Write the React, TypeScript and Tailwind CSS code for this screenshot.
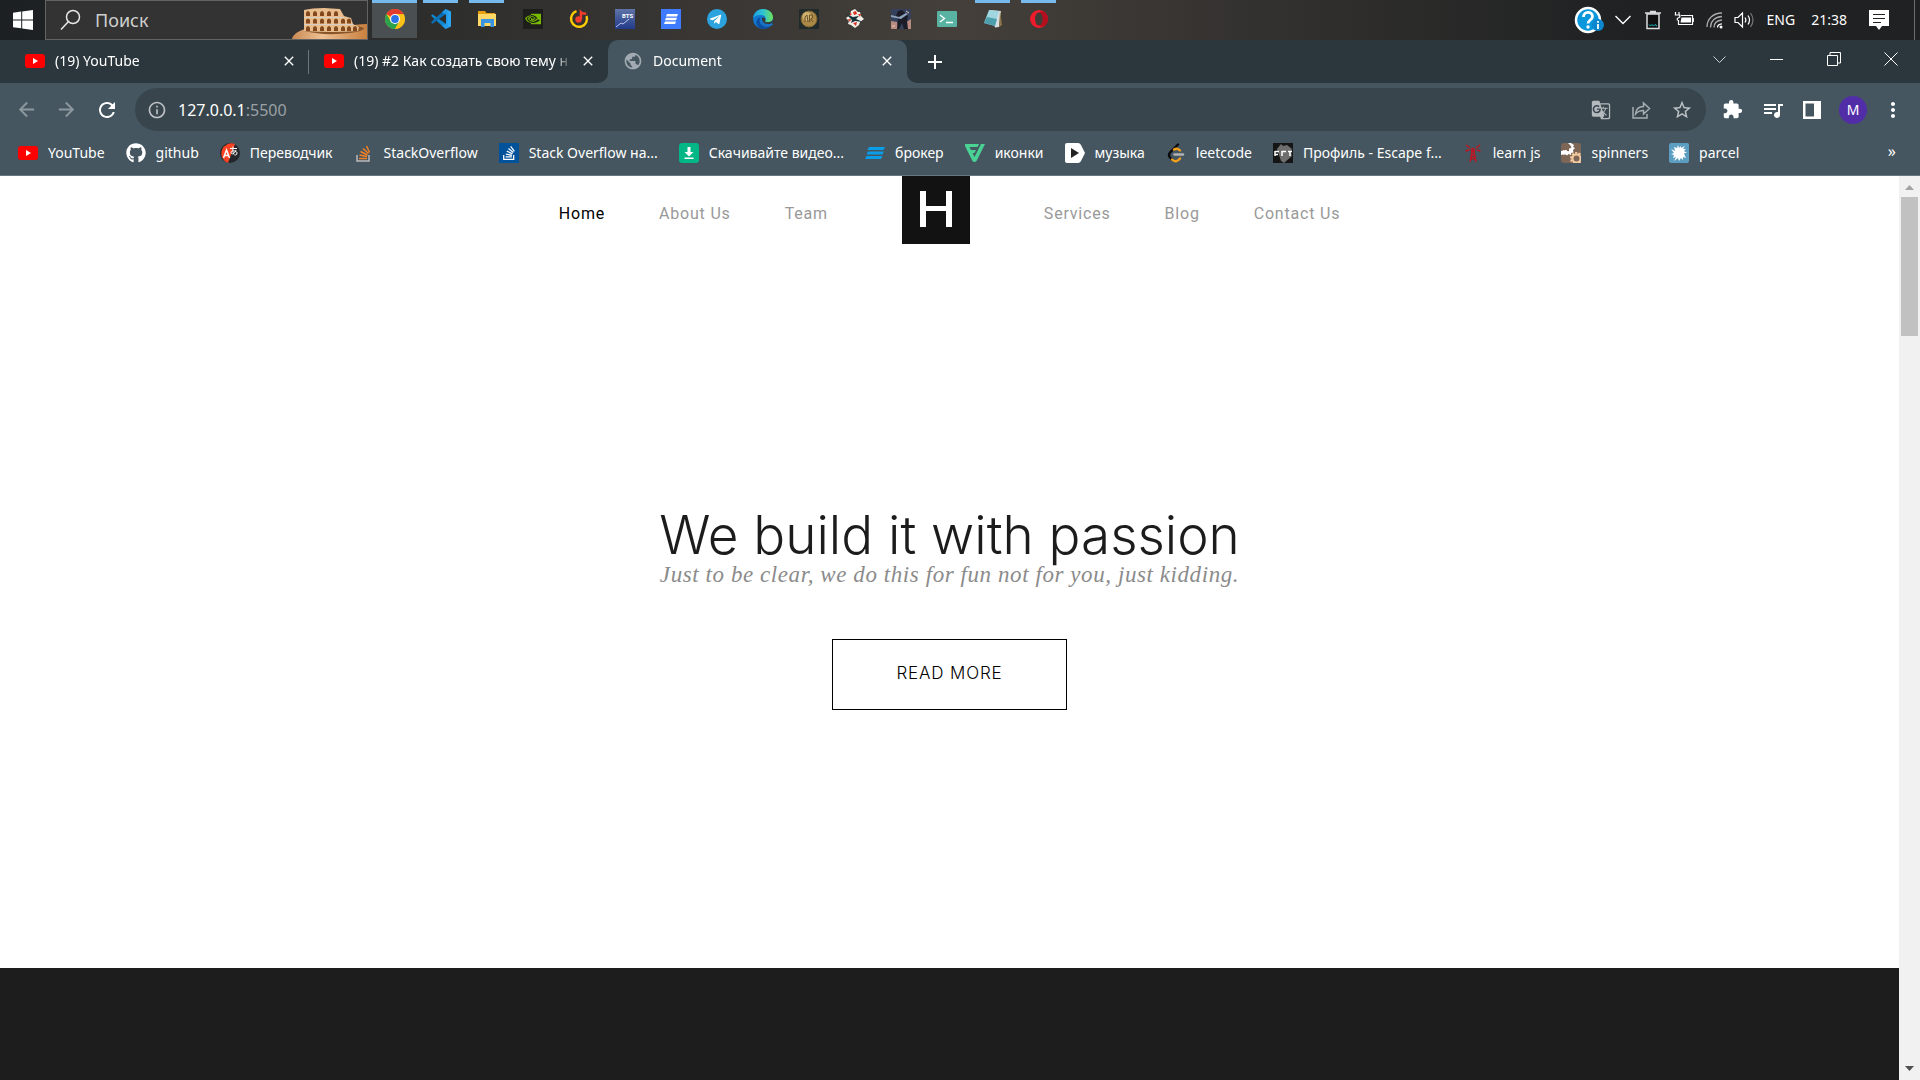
import React, { ReactNode } from "react";
import {
  MdArrowBack, MdArrowForward, MdRefresh, MdInfoOutline, MdPublic, MdStarBorder,
  MdExtension, MdQueueMusic, MdGTranslate, MdMoreVert, MdAdd, MdClose,
} from "react-icons/md";
import { FaGithub, FaTelegramPlane, FaStackOverflow } from "react-icons/fa";
import { SiNvidia } from "react-icons/si";

const ui = "font-['Noto_Sans',sans-serif]";

const YouTube = () => (
  <svg width="20" height="20" viewBox="0 0 20 20"><rect y="3" width="20" height="14" rx="3" fill="#f00" /><path d="M8 7l5 3-5 3z" fill="#fff" /></svg>
);

const WindowsLogo = () => (
  <svg width="20" height="20" viewBox="0 0 20 20" fill="#fff"><path d="M0 2.8L8.2 1.6V9.4H0zM9.2 1.5L20 0V9.4H9.2zM0 10.4H8.2V18.3L0 17.2zM9.2 10.4H20V20L9.2 18.4z" /></svg>
);

const Colosseum = () => (
  <svg width="75" height="38" viewBox="0 1 75 38">
    <defs>
      <linearGradient id="sand" x1="0" x2="1"><stop offset="0" stopColor="#c98a52" /><stop offset=".4" stopColor="#eec195" /><stop offset="1" stopColor="#c9803f" /></linearGradient>
    </defs>
    <path d="M0 39C1 33 10 29 22 27L62 25Q70 24 75 24V39z" fill="url(#sand)" />
    <path d="M12 31Q32 36 58 33Q72 31 72 28L66 26L12 28z" fill="#8a5529" />
    <path d="M12 10Q20 8 32 8L48 9L52 16L59 18L61 24L67 27L66 31Q40 33 12 31z" fill="#e9bd8d" />
    {[14, 21, 28, 35, 42].map((x) => <path key={x} d={`M${x} 16v-3.500q2-3 4 0v3.500z`} fill="#83491d" />)}
    {[14, 21, 28, 35, 42, 49, 55].map((x) => <path key={x} d={`M${x} 23.500v-3.500q2-3 4 0v3.500z`} fill="#83491d" />)}
    {[14, 21, 28, 35, 42, 49, 55, 61].map((x) => <path key={x} d={`M${x} 31v-3.500q2-3 4 0v3.500z`} fill="#83491d" />)}
    <path d="M12 17.500H52M12 24.500H61" stroke="#d8cfc4" strokeWidth="1" />
  </svg>
);

const Chrome = () => (
  <svg width="20" height="20" viewBox="0 0 20 20">
    <circle cx="10" cy="10" r="10" fill="#fbc116" />
    <path d="M10 10L1.340 5A10 10 0 0 1 18.660 5z" fill="#e33b2e" />
    <path d="M1.340 5A10 10 0 0 0 10 20L14.330 12.500L10 10L5.670 12.500z" fill="#2ba24c" />
    <path d="M10 5H18.660A10 10 0 0 1 10 20L14.330 12.500z" fill="#fbc116" />
    <circle cx="10" cy="10" r="5" fill="#fff" /><circle cx="10" cy="10" r="3.900" fill="#2a72e8" />
  </svg>
);
const VsCode = () => (
  <svg width="20" height="20" viewBox="0 0 20 20">
    <path d="M1.500 5.300L0 6.700l11.500 10.500L15 20V15z" fill="#0f86d0" />
    <path d="M1.500 14.700L0 13.300 11.500 2.800 15 0v5z" fill="#0b6fb5" />
    <path d="M14.500 0L20 2.500v15L14.500 20q1 0 1-1.200V1.200Q15.500 0 14.500 0z" fill="#2ba6f2" />
    <path d="M14.500 0L11 3.200l4 2.300v9L11 16.800l3.500 3.200 2-1V1z" fill="#239ae8" />
  </svg>
);
const Explorer = () => (
  <svg width="20" height="20" viewBox="0 0 20 20">
    <path d="M1 2h7l1.500 2H18v3H1z" fill="#e8a010" /><path d="M1 5h18v12H1z" fill="#ffd968" />
    <path d="M4 18v-8h13v8h-3.500v-4h-6v4z" fill="#3a94e4" />
  </svg>
);
const Nvidia = () => <span className="flex size-5 items-center justify-center bg-[#1d1e1c]"><SiNvidia size={16} color="#76b900" /></span>;
const YaMusic = () => (
  <svg width="20" height="20" viewBox="0 0 20 20"><path d="M7.500 2.200A8 8 0 1 0 17.500 7" fill="none" stroke="#fc0" strokeWidth="2.400" /><circle cx="9.500" cy="10.500" r="3.200" fill="#f53c2c" /><path d="M10.700 10V0l2.500 3 4 .5v2.500l-4-.5v5z" fill="#f53c2c" /></svg>
);
const Chart = () => (
  <svg width="20" height="20" viewBox="0 0 20 20">
    <defs><linearGradient id="bts" x2="0" y2="1"><stop stopColor="#5f74a8" /><stop offset="1" stopColor="#223a8a" /></linearGradient></defs>
    <path d="M0 0h20v20H0z" fill="url(#bts)" /><path d="M1 18l5-4 2 1 6-5" fill="none" stroke="#b9c6ea" />
    <text x="7" y="9" fontSize="6" fontWeight="700" fill="#fff" fontFamily="Roboto">BTS</text>
  </svg>
);
const Stripes = () => (
  <svg width="20" height="20" viewBox="0 0 20 20"><path d="M0 0h20v20H0z" fill="#3f7bff" /><path d="M6 5h11l-1 2.500H5zM5 8.800h11l-1 2.500H4zM4 12.600h11l-1 2.500H3z" fill="#fff" /></svg>
);
const Telegram = () => <span className="flex size-5 items-center justify-center rounded-full bg-[#2ba3de] pr-[2px]"><FaTelegramPlane size={13} color="#fff" /></span>;
const Edge = () => (
  <svg width="20" height="20" viewBox="0 0 20 20">
    <defs>
      <linearGradient id="e1" x1="0" x2="1"><stop stopColor="#1b9de2" /><stop offset=".5" stopColor="#30c3d2" /><stop offset="1" stopColor="#6be35a" /></linearGradient>
    </defs>
    <circle cx="10" cy="10" r="10" fill="#1278cf" />
    <path d="M0 9.500C.5 4 4.500 0 10 0c6 0 10 4 10 8.500 0 3-2.500 4.800-5 4.800-2.500 0-3.500-.8-2.700-1.800C14 9 11.500 6 8 6 4 6 .8 7.500 0 9.500z" fill="url(#e1)" />
    <path d="M7.500 8.500C5 12 7.500 17.500 13 17.500c3 0 4.500-1 5.500-1.800C17 18.500 13.500 20 10 20 5.500 19.500 3 16 3.500 12.500 4 10 5.500 8.500 7.500 8.500z" fill="#0d4f9f" />
    <path d="M9 8.500c-2 2.500-.5 6.500 4.500 7 2.500.2 4.500-.8 5.500-1.500l1 1.500-2 1.500c-4 2-10 0-10.500-5z" fill="#1a6fc4" />
    <path d="M9 8.800c2-.8 4 .8 3.300 2.700-.6 1.200.2 1.800 2.700 1.800 2 0 4-.8 5-2.500l-.8 3c-4 3-11 .5-10.200-5z" fill="#3a3835" />
  </svg>
);
const Coin = () => (
  <svg width="20" height="20" viewBox="0 0 20 20"><path d="M0 0h20v20H0z" fill="#1e2a2c" /><circle cx="10" cy="10" r="8" fill="#a98848" stroke="#7c602c" /><circle cx="8" cy="7.500" r="4.500" fill="#cdb070" /><path d="M6 13V8l2-2 1 7M10.500 13V6h3v3l-2 1 2.500 3" fill="none" stroke="#6b5226" strokeWidth="1" /></svg>
);
const Cards = () => (
  <svg width="20" height="20" viewBox="0 0 20 20"><path d="M10 0l3 3 2 0 1 4 3 3-4 3-1 3-4 3-4-3-3-1 1-3-3-3 4-3 1-4z" fill="#f3efe9" /><path d="M8 3l3-1 1 3-3 1zM13 5h3l-1 3zM3 10l3 0-1 3zM8 14l4-1-1 4zM5 4l2 1-2 2z" fill="#d83322" /><path d="M1 5l7 3 6-1-3 3 7 3-8-1-4 2 1-3z" fill="#16323b" /></svg>
);
const Soldier = () => (
  <svg width="20" height="20" viewBox="0 0 20 20"><path d="M0 0h20v20H0z" fill="#34405c" /><path d="M0 12l6 1 1 7H0zM14 14l6-4v10h-4z" fill="#b98a80" /><path d="M7 2l4-1 3 3 3 3-1 5 1 8h-4l-2-6-3 6H6l1-9-2-4z" fill="#1b1c28" /><path d="M0 6l8 2 7-4 2 1-7 5-10-2z" fill="#8fa3bf" /><path d="M1 17h3M15 2l3 2" stroke="#e7c9bd" /></svg>
);
const Terminal = () => (
  <svg width="20" height="20" viewBox="0 0 20 20"><rect y="2" width="20" height="16" rx="1" fill="#59b3a3" /><path d="M3 6l4.500 3.500L3 13M9 13.500h7" fill="none" stroke="#fff" strokeWidth="1.300" /></svg>
);
const Notepad = () => (
  <svg width="20" height="20" viewBox="0 0 20 20"><path d="M6 1l12 1-2 16-4 .5z" fill="#d8dfe2" /><path d="M6 1l10 1-4 15L1 14z" fill="#9fd6e0" /><path d="M4 8l10 2-2 7L1 14z" fill="#4e9fae" /><path d="M17 2l2 14-3 2z" fill="#8c7546" /></svg>
);
const Opera = () => (
  <svg width="20" height="20" viewBox="0 0 20 20"><path fillRule="evenodd" d="M10 1a9 9 0 1 1 0 18 9 9 0 0 1 0-18zM10 3.500c-2.300 0-3.900 2.900-3.900 6.500s1.600 6.500 3.900 6.500 3.900-2.900 3.900-6.500-1.600-6.500-3.900-6.500z" fill="#ee1c2b" /><path d="M10 16.500c2.300 0 3.900-2.900 3.900-6.500S12.300 3.500 10 3.500c3-2.500 9 0 9 6.500s-6 9-9 6.500z" fill="#b40d1c" /></svg>
);

type TaskApp = { name: string; icon: ReactNode; open?: boolean; active?: boolean };
const apps: TaskApp[] = [
  { name: "Chrome", icon: <Chrome />, open: true, active: true },
  { name: "VS Code", icon: <VsCode />, open: true },
  { name: "Explorer", icon: <Explorer />, open: true },
  { name: "Nvidia", icon: <Nvidia /> },
  { name: "Music", icon: <YaMusic /> },
  { name: "BTS", icon: <Chart /> },
  { name: "Broker", icon: <Stripes /> },
  { name: "Telegram", icon: <Telegram /> },
  { name: "Edge", icon: <Edge /> },
  { name: "Coin", icon: <Coin /> },
  { name: "Cards", icon: <Cards /> },
  { name: "Game", icon: <Soldier /> },
  { name: "Terminal", icon: <Terminal /> },
  { name: "Notepad", icon: <Notepad />, open: true },
  { name: "Opera", icon: <Opera />, open: true },
];

function Taskbar() {
  return (
    <header className="flex h-10 shrink-0 bg-linear-to-r from-[#1c2022] via-[#443f3a] via-50% to-[#1f2122] to-85% text-white">
      <button aria-label="Start" className="flex w-[45px] items-center justify-center"><WindowsLogo /></button>
      <div className="flex w-[323px] items-center justify-between border border-[#636363] bg-[#333] pl-3">
        <svg width="24" height="24" viewBox="0 0 24 24" fill="none" stroke="#e6e6e6" strokeWidth="1.500"><circle cx="15" cy="9" r="6.500" /><path d="M10.500 13.500L3 21.500" /></svg>
        <input aria-label="Поиск" placeholder="Поиск" className="ml-[13px] w-0 flex-1 bg-transparent text-lg outline-none placeholder:text-[#cfcfcf]" />
        <Colosseum />
      </div>
      <nav aria-label="Apps" className="ml-1 flex gap-px">
        {apps.map((a) => (
          <button key={a.name} aria-label={a.name} className={`flex h-[38px] w-[45px] flex-col items-center ${a.active ? "bg-[#4a4f52]" : ""}`}>
            <span className={`h-[3px] ${a.active ? "w-full" : "w-[35px]"} ${a.open ? "bg-[#76b9ed]" : ""}`} />
            <span className="mt-[6px]">{a.icon}</span>
          </button>
        ))}
      </nav>
      <div className="ml-auto flex items-center">
        <button aria-label="Help" className="mr-[10px]">
          <svg width="30" height="28" viewBox="0 0 30 28"><circle cx="14" cy="14" r="12" fill="#0a97dc" stroke="#fff" strokeWidth="2.500" /><path d="M9.500 11c0-6 9-6 9-.5 0 3.500-4.500 3.500-4.500 7" fill="none" stroke="#fff" strokeWidth="2.800" /><circle cx="14" cy="21" r="1.700" fill="#fff" /><circle cx="24" cy="19" r="6" fill="#0b86cf" /><path d="M24 18v5M24 15v1.800" stroke="#fff" strokeWidth="1.800" /></svg>
        </button>
        <button aria-label="Show hidden icons" className="mr-3"><svg width="18" height="18" viewBox="0 0 18 18" fill="none" stroke="#fff" strokeWidth="1.400"><path d="M1.500 5L9 12.500 16.500 5" /></svg></button>
        <button aria-label="Recycle bin" className="mr-3"><svg width="18" height="20" viewBox="0 0 18 20"><path d="M3 4h12v14.500H3z" fill="#111" stroke="#ddd" strokeWidth="1.500" /><path d="M1 3h16M6 1.500h6" stroke="#ddd" strokeWidth="1.500" /><path d="M5 14.500l1.500 1.500L8 14.500 9.500 16l1.500-1.500 2 1.500" fill="none" stroke="#18c6cf" /></svg></button>
        <button aria-label="Battery" className="mr-3"><svg width="20" height="18" viewBox="0 0 20 18" fill="none" stroke="#fff" strokeWidth="1.200"><path d="M7 4.500h11.500v9h-14V9M19.300 7v4M1.500 1v3M5 1v3M.8 4h5v2L3.300 7.500 3.300 9.500" /><path d="M7.500 6.500H17v5H6.500z" fill="#fff" stroke="none" /></svg></button>
        <button aria-label="Wi-Fi" className="mr-[10px]"><svg width="18" height="18" viewBox="0 0 18 18" fill="none" stroke="#aaa" strokeWidth="1.300"><path d="M1 16C1 8 7 2 16 2M4.500 16.500C4.500 10 9 6 16 5.500M8 16.500C8 12 11 9.500 16 9" /><path d="M11.500 16.500c0-2 1.500-3.500 4.500-3.700" stroke="#fff" /><circle cx="15" cy="16" r="1.500" fill="#fff" stroke="none" /></svg></button>
        <button aria-label="Volume" className="mr-[13px]"><svg width="20" height="18" viewBox="0 0 20 18" fill="none" stroke="#fff" strokeWidth="1.200"><path d="M1 6.500h3L8.500 2v14L4 11.500H1zM11 6.500q1.800 2.500 0 5M14 4.500q3 4.500 0 9" /><path d="M16.500 2q5 7 0 14" stroke="#777" /></svg></button>
        <span className="mr-4 text-sm">ENG</span>
        <time className="mr-[21px] text-sm">21:38</time>
        <button aria-label="Notifications" className="mr-[24px]"><svg width="22" height="20" viewBox="0 0 22 20"><path d="M1 0h20v16h-7l-3 4-3-4H1z" fill="#fff" /><path d="M5 4.500h12M5 8.500h12M5 12.500h8" stroke="#222" strokeWidth="1.200" /></svg></button>
        <span className="mr-[5px] h-10 w-px bg-[#6d6d6d]" />
      </div>
    </header>
  );
}

function Tab({ icon, title, active, divider }: { icon: ReactNode; title: string; active?: boolean; divider?: boolean }) {
  return (
    <div className={`flex h-[43px] w-[299px] items-center pr-3 pb-[2px] pl-[15px] ${active ? "rounded-t-[10px] bg-[#455660]" : ""} ${divider ? "bg-linear-to-r from-[#6b777d] to-[#6b777d] bg-[length:1px_24px] bg-right bg-no-repeat" : ""}`}>
      {icon}
      <span className="ml-[10px] flex-1 overflow-hidden mask-r-from-92% text-sm whitespace-nowrap text-white">{title}</span>
      <button aria-label="Close tab" className="ml-2"><MdClose size={16} color="#fff" /></button>
    </div>
  );
}

function TabStrip() {
  return (
    <div className="flex h-[43px] shrink-0 bg-[#455660]">
      <div className="flex rounded-br-[10px] bg-[#2c373d] pl-[10px]">
        <Tab icon={<YouTube />} title="(19) YouTube" divider />
        <Tab icon={<YouTube />} title="(19) #2 Как создать свою тему н" />
      </div>
      <div className="bg-[#2c373d]">
        <Tab icon={<MdPublic size={20} color="#a3abb2" />} title="Document" active />
      </div>
      <div className="flex flex-1 items-center rounded-bl-[10px] bg-[#2c373d]">
        <button aria-label="New tab" className="ml-4"><MdAdd size={24} color="#fff" /></button>
        <div className="ml-auto flex h-full items-center gap-[43px] pr-[22px] pb-[5px]">
          <button aria-label="Search tabs"><svg width="15" height="15" viewBox="0 0 15 15" fill="none" stroke="#ccd1d4"><path d="M1.500 4.500l6 6 6-6" /></svg></button>
          <button aria-label="Minimize"><svg width="14" height="14" viewBox="0 0 14 14" stroke="#fff"><path d="M0 7.500h13" /></svg></button>
          <button aria-label="Restore"><svg width="14" height="14" viewBox="0 0 14 14" fill="none" stroke="#fff"><path d="M.5 3.500h10v10H.5zM3 3V.5h10.500V11H11" /></svg></button>
          <button aria-label="Close"><svg width="14" height="14" viewBox="0 0 14 14" stroke="#fff"><path d="M.5.5l13 13M13.500.5l-13 13" /></svg></button>
        </div>
      </div>
    </div>
  );
}

function Toolbar() {
  return (
    <div className="flex h-[49px] shrink-0 items-center bg-[#455660] pt-1 text-white">
      <div className="flex items-center gap-[17px] pl-[15px]">
        <button aria-label="Back"><MdArrowBack size={23} color="#8d989e" /></button>
        <button aria-label="Forward"><MdArrowForward size={23} color="#8d989e" /></button>
        <button aria-label="Reload"><MdRefresh size={24} /></button>
      </div>
      <div className="ml-4 flex h-[43px] flex-1 items-center rounded-full bg-[#38454c] pr-[13px] pl-3 text-[#9aa0a6]">
        <MdInfoOutline size={20} color="#bdc1c6" />
        <a href="http://127.0.0.1:5500" className="ml-[11px] text-base"><span className="text-white">127.0.0.1</span>:5500</a>
        <div className="ml-auto flex items-center gap-5">
          <button aria-label="Translate"><MdGTranslate size={20} color="#b4babe" /></button>
          <button aria-label="Share"><svg width="20" height="20" viewBox="0 0 20 20" fill="none" stroke="#a5adb1" strokeWidth="1.500"><path d="M2 7v11h14v-4" /><path d="M4.500 14c.5-5 3-7.500 8-7.500V3l6 5.500-6 5.500v-3.500c-4 0-6 1-8 3.500z" /></svg></button>
          <button aria-label="Bookmark"><MdStarBorder size={22} color="#bdc3c7" /></button>
        </div>
      </div>
      <div className="flex items-center gap-[18px] pr-[15px] pl-4">
        <button aria-label="Extensions"><MdExtension size={21} /></button>
        <button aria-label="Media"><MdQueueMusic size={24} /></button>
        <button aria-label="Side panel"><svg width="18" height="18" viewBox="0 0 18 18"><path d="M0 0h18v18H0z" fill="#fff" /><path d="M2.500 2.500h8.500v13H2.500z" fill="#455660" /></svg></button>
        <div className="flex items-center gap-[14px]">
          <button aria-label="Profile" className="size-7 rounded-full bg-[#512da8] text-sm">M</button>
          <button aria-label="Menu"><MdMoreVert size={24} /></button>
        </div>
      </div>
    </div>
  );
}

const Translate = () => (
  <svg width="20" height="20" viewBox="0 0 20 20"><circle cx="10" cy="10" r="10" fill="#24262b" /><path d="M15 1A10 10 0 1 0 8 20z" fill="#fb4323" /><path d="M3.500 15L6.500 7l3 8M4.500 12.500h4" fill="none" stroke="#fff" strokeWidth="1.500" /><path d="M10 5.500h7M13 3.500c0 4-.5 6 1 8M16 7c-1 4-5 5-5 2.500S17 7.500 17 10 15 12 14.500 12" fill="none" stroke="#fff" /></svg>
);
const RuStack = () => <span className="flex size-5 items-center justify-center bg-[#00529b]"><FaStackOverflow size={16} color="#fff" /></span>;
const Download = () => (
  <svg width="20" height="20" viewBox="0 0 20 20"><rect width="20" height="20" rx="3" fill="#00b785" /><path d="M8.500 4h3v5h3L10 13.500 5.500 9h3zM5.500 14.500h9V16h-9z" fill="#fff" /></svg>
);
const Broker = () => (
  <svg width="20" height="20" viewBox="0 0 20 20" fill="#0a9ee8"><path d="M4 4h16l-1.500 3h-16zM3 8.500h16L17.500 11.500h-16zM1.500 13H17.500L16 16H0z" /></svg>
);
const Flaticon = () => (
  <svg width="20" height="20" viewBox="0 0 20 20" fill="#4ad295"><path d="M0 1h14l-1.500 3H4.500L6 7h5L9.500 10H7.600L9.500 14 16 1h4L11.500 18q-2 2-4 0L0 3z" /></svg>
);
const Music = () => (
  <svg width="20" height="20" viewBox="0 0 20 20"><path d="M2 0h11q2 0 3 2l4 8-4 8q-1 2-3 2H2q-2 0-2-2V2q0-2 2-2z" fill="#fff" /><path d="M6 5l8 5-8 5z" fill="#222" /></svg>
);
const Leet = () => (
  <svg width="20" height="20" viewBox="0 0 20 20" fill="none" strokeWidth="2.400" strokeLinecap="round"><path d="M12 1.500L4 9.500q-2 2.500 0 5L6 16.500" stroke="#0a0a0a" /><path d="M6 16.500q4 4 8-1M8 6.500q3-2 6 1" stroke="#f6a019" /><path d="M8.500 11.500H17" stroke="#b3b3b3" /></svg>
);
const Eft = () => (
  <svg width="20" height="20" viewBox="0 0 20 20"><path d="M0 0h20v20H0z" fill="#151515" /><path d="M4 6l4-5 2 2 4-1 5 4-1 3 1 4-8 7-3-2z" fill="#6e6e6e" /><path d="M2 8.500h4M2 11.500h3M2 8v5M9 8.500h4M9 8v5M15 8.500h4M17 8v5" stroke="#fff" strokeWidth="1.500" /></svg>
);
const LearnJs = () => (
  <svg width="20" height="20" viewBox="0 0 20 20" fill="none" stroke="#c0141f" strokeWidth="1.400"><path d="M7 19L9.300 8h1.400L13 19M8 13.500l5 4M12 13.500l-5 4M8.500 12h3M3 2l4 3M17 2l-4 3M2.500 8l4-1M17.500 8l-4-1" /><circle cx="10" cy="7" r="1.500" /></svg>
);
const Gears = () => (
  <svg width="20" height="20" viewBox="0 0 20 20"><rect width="20" height="20" rx="3" fill="#7d6655" /><path d="M2 9V7l2 1 1-1 1 2 2-1V5.500l2.500-.5-1-2.500L8 1 7 0h3l3 2-1 2 2 1-2 2 .5 2.500-2.500.5v2L7.500 11 6 12.500 4.500 11 2 12l-.5-2.500z" fill="#fff" /><path d="M0 8l5-1 3 2-2 3-3-1-3 1z" fill="#fff" /><circle cx="15.500" cy="15.500" r="5.500" fill="none" stroke="#f4cba0" strokeWidth="2" strokeDasharray="2.200 1.200" /><circle cx="15.500" cy="15.500" r="4" fill="none" stroke="#f4cba0" strokeWidth="2" /></svg>
);
const Parcel = () => (
  <svg width="20" height="20" viewBox="0 0 20 20"><rect width="20" height="20" rx="2" fill="#5b9ec1" /><path d="M8 5l1-3 1 3 2-2 0 2 4-2-2 3 3 0-2 2 3 2-3 0 1 3 1 2-3-1 0 3-2-2-2 3-1-3-4 3 2-4-3 1 1-3-3-1 3-1-3-4 4 2-1-4z" fill="#fff" /></svg>
);

const bookmarks: { label: string; icon: ReactNode }[] = [
  { label: "YouTube", icon: <YouTube /> },
  { label: "github", icon: <FaGithub size={20} color="#fff" /> },
  { label: "Переводчик", icon: <Translate /> },
  { label: "StackOverflow", icon: <svg width="20" height="20" viewBox="0 0 20 20" fill="none" strokeWidth="1.500"><path d="M3 12v6h12v-6" stroke="#bcbbbb" /><path d="M5 15.500h8M5.500 12l7.500 1.500M6.500 8.500l7 3.500M9 5.500l5.500 5M12.500 3l3 6.500" stroke="#f48024" /></svg> },
  { label: "Stack Overflow на...", icon: <RuStack /> },
  { label: "Скачивайте видео...", icon: <Download /> },
  { label: "брокер", icon: <Broker /> },
  { label: "иконки", icon: <Flaticon /> },
  { label: "музыка", icon: <Music /> },
  { label: "leetcode", icon: <Leet /> },
  { label: "Профиль - Escape f...", icon: <Eft /> },
  { label: "learn js", icon: <LearnJs /> },
  { label: "spinners", icon: <Gears /> },
  { label: "parcel", icon: <Parcel /> },
];

function Bookmarks() {
  return (
    <nav aria-label="Bookmarks" className="flex h-11 shrink-0 items-center gap-[21px] border-b border-[#6a777e] bg-[#455660] pr-6 pb-px pl-[18px] text-sm whitespace-nowrap text-white">
      {bookmarks.map((b) => (
        <a key={b.label} href="#" className="flex items-center gap-[10px]">{b.icon}{b.label}</a>
      ))}
      <button aria-label="More bookmarks" className="ml-auto pb-1 text-base">»</button>
    </nav>
  );
}

function Site() {
  return (
    <div className="flex min-h-0 flex-1">
      <main className="flex flex-1 flex-col bg-white">
        <section className="flex h-[792px] shrink-0 flex-col">
          <nav aria-label="Site" className="flex items-start justify-center gap-[54px] font-['Roboto',sans-serif] text-base tracking-wider text-[#999]">
            <a href="#" className="pt-[26px] text-black">Home</a>
            <a href="#" className="pt-[26px]">About Us</a>
            <a href="#" className="pt-[26px]">Team</a>
            <a href="#" aria-label="H" className="mx-5">
              <svg width="68" height="68" viewBox="0 0 68 68"><path d="M0 0h68v68H0z" fill="#121212" /><path d="M18 15h6v15h20V15h6v36h-6V35H24v16h-6z" fill="#fff" /></svg>
            </a>
            <a href="#" className="pt-[26px]">Services</a>
            <a href="#" className="pt-[26px]">Blog</a>
            <a href="#" className="pt-[26px]">Contact Us</a>
          </nav>
          <div className="flex flex-1 flex-col items-center justify-center pt-1">
            <h1 className="font-['Inter',sans-serif] text-[53px] leading-[56px] font-light text-[#1c1c1c]">We build it with passion</h1>
            <p className="font-['Liberation_Serif',serif] text-[23px] leading-6 tracking-wide text-[#8b8b8b] italic">Just to be clear, we do this for fun not for you, just kidding.</p>
            <button className="mt-[52px] h-[71px] w-[235px] border border-black font-['Inter',sans-serif] text-[17px] font-light tracking-wider text-black">READ MORE</button>
          </div>
        </section>
        <section className="flex-1 bg-[#1d1d1d]" />
      </main>
      <div aria-hidden="true" className="flex w-[21px] flex-col items-center bg-[#f1f1f1]">
        <svg width="17" height="21" viewBox="0 0 17 21"><path d="M4 14l4.500-5 4.500 5z" fill="#a3a3a3" /></svg>
        <div className="h-[139px] w-[17px] bg-[#c1c1c1]" />
        <svg className="mt-auto" width="17" height="21" viewBox="0 0 17 21"><path d="M4 7l4.500 5 4.500-5z" fill="#505050" /></svg>
      </div>
    </div>
  );
}

export default function App() {
  return (
    <div className={`flex h-screen flex-col overflow-hidden bg-white ${ui}`}>
      <Taskbar />
      <TabStrip />
      <Toolbar />
      <Bookmarks />
      <Site />
    </div>
  );
}
